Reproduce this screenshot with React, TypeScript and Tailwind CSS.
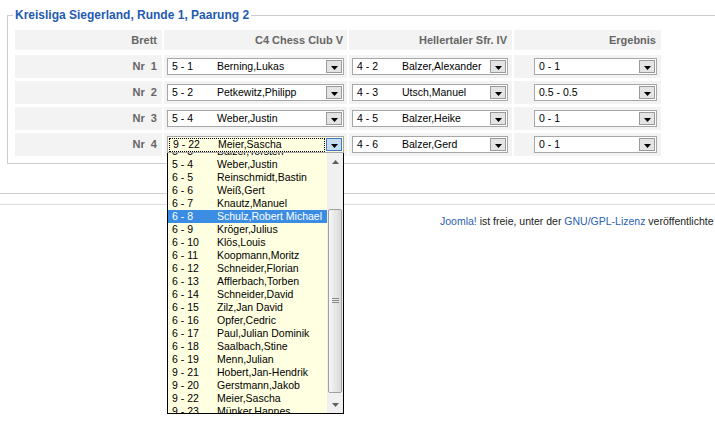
import React from "react";

type Row = { nr: string; a: [string, string]; b: [string, string]; res: string; open?: boolean };

const rows: Row[] = [
  { nr: "Nr\u00a0 1", a: ["5 - 1", "Berning,Lukas"], b: ["4 - 2", "Balzer,Alexander"], res: "0 - 1" },
  { nr: "Nr\u00a0 2", a: ["5 - 2", "Petkewitz,Philipp"], b: ["4 - 3", "Utsch,Manuel"], res: "0.5 - 0.5" },
  { nr: "Nr\u00a0 3", a: ["5 - 4", "Weber,Justin"], b: ["4 - 5", "Balzer,Heike"], res: "0 - 1" },
  { nr: "Nr\u00a0 4", a: ["9 - 22", "Meier,Sascha"], b: ["4 - 6", "Balzer,Gerd"], res: "0 - 1", open: true },
];

const items: [string, string][] = [
  ["5 - 3", "Balzer,Torsten"],
  ["5 - 4", "Weber,Justin"],
  ["6 - 5", "Reinschmidt,Bastin"],
  ["6 - 6", "Weiß,Gert"],
  ["6 - 7", "Knautz,Manuel"],
  ["6 - 8", "Schulz,Robert Michael"],
  ["6 - 9", "Kröger,Julius"],
  ["6 - 10", "Klös,Louis"],
  ["6 - 11", "Koopmann,Moritz"],
  ["6 - 12", "Schneider,Florian"],
  ["6 - 13", "Afflerbach,Torben"],
  ["6 - 14", "Schneider,David"],
  ["6 - 15", "Zilz,Jan David"],
  ["6 - 16", "Opfer,Cedric"],
  ["6 - 17", "Paul,Julian Dominik"],
  ["6 - 18", "Saalbach,Stine"],
  ["6 - 19", "Menn,Julian"],
  ["9 - 21", "Hobert,Jan-Hendrik"],
  ["9 - 20", "Gerstmann,Jakob"],
  ["9 - 22", "Meier,Sascha"],
  ["9 - 23", "Münker,Hannes"],
];

function Arrow({ open }: { open?: boolean }) {
  return (
    <div
      className={
        open
          ? "mr-[1px] flex h-[13px] w-[16px] shrink-0 items-center justify-center border border-[#3d7bbf] bg-[#c6ddf4]"
          : "mr-[1px] flex h-[13px] w-[16px] shrink-0 items-center justify-center border border-[#9a9a9a] bg-[#e4e4e4]"
      }
    >
      <svg width="7" height="4" viewBox="0 0 7 4" className="mt-[2px]">
        <polygon points="0,0 7,0 3.5,4" fill="#000" />
      </svg>
    </div>
  );
}

function Scrollbar() {
  return (
    <div className="flex w-[16px] shrink-0 flex-col bg-[#f0f0f0]">
      <div className="flex h-[17px] items-center justify-center">
        <svg width="7" height="4" viewBox="0 0 7 4">
          <polygon points="0,4 7,4 3.5,0" fill="#606060" />
        </svg>
      </div>
      <div className="flex-1">
        <div className="mx-[1px] mt-[39px] flex h-[184px] items-center justify-center rounded-[2px] border border-[#a0a0a0] bg-gradient-to-r from-[#f7f7f7] to-[#d9d9d9]">
          <svg width="7" height="6" viewBox="0 0 7 6">
            <rect x="0" y="0" width="7" height="1" fill="#8a8a8a" />
            <rect x="0" y="2" width="7" height="1" fill="#8a8a8a" />
            <rect x="0" y="4" width="7" height="1" fill="#8a8a8a" />
          </svg>
        </div>
      </div>
      <div className="flex h-[17px] items-center justify-center">
        <svg width="7" height="4" viewBox="0 0 7 4">
          <polygon points="0,0 7,0 3.5,4" fill="#606060" />
        </svg>
      </div>
    </div>
  );
}

function Dropdown() {
  return (
    <div className="absolute left-[-1px] top-[16px] z-10 flex h-[261px] w-[177px] border-x border-b border-black bg-[#ffffe1]">
      <div className="flex-1 overflow-hidden">
        <div className="mt-[-8px]">
          {items.map(([c, n], i) => (
            <div
              key={i}
              className={
                c === "6 - 8"
                  ? "flex h-[13px] items-center whitespace-nowrap bg-[#3b8de4] pl-[4px] leading-[13px] text-white"
                  : "flex h-[13px] items-center whitespace-nowrap pl-[4px] leading-[13px] text-black"
              }
            >
              <span className="w-[45px] shrink-0">{c}</span>
              <span>{n}</span>
            </div>
          ))}
        </div>
      </div>
      <Scrollbar />
    </div>
  );
}

function Select({
  className,
  code,
  name,
  open,
}: {
  className: string;
  code: string;
  name?: string;
  open?: boolean;
}) {
  return (
    <div
      className={`relative flex h-[17px] items-center border border-[#a7a7a7] ${
        open ? "bg-[#ffffe1]" : "bg-white"
      } ${className}`}
    >
      <div
        className={
          open
            ? "ml-[1px] mr-[1px] flex h-[14px] flex-1 items-center overflow-hidden whitespace-nowrap border border-dotted border-black pl-[3px]"
            : "flex flex-1 items-center overflow-hidden whitespace-nowrap pl-[4px]"
        }
      >
        {name !== undefined ? (
          <>
            <span className="w-[45px] shrink-0">{code}</span>
            <span>{name}</span>
          </>
        ) : (
          <span>{code}</span>
        )}
      </div>
      <Arrow open={open} />
      {open && <Dropdown />}
    </div>
  );
}

export default function App() {
  return (
    <div className="relative h-[432px] w-[715px] overflow-hidden bg-white font-['Liberation_Sans',Arial,sans-serif] text-[10.5px] text-black">
      <fieldset className="ml-[7px] mt-[8px] border-b border-l border-t border-[#cccccc] pb-[7px] pl-[7px] pt-[8px]">
        <legend className="ml-[-2px] px-[2px] text-[12px] font-bold leading-[14px] text-[#1f5bb0]">
          Kreisliga Siegerland, Runde 1, Paarung 2
        </legend>
        <div className="flex flex-col">
          <div className="mb-[5px] flex h-[20px] gap-[2px] text-[11px] font-bold text-[#666666]">
            <div className="flex w-[147px] items-center justify-end bg-[#f3f3f3] pr-[5px]">Brett</div>
            <div className="flex w-[183px] items-center justify-end bg-[#f3f3f3] pr-[4px]">C4 Chess Club V</div>
            <div className="flex w-[163px] items-center justify-end bg-[#f3f3f3] pr-[5px]">Hellertaler Sfr. IV</div>
            <div className="flex w-[147px] items-center justify-end bg-[#f3f3f3] pr-[5px]">Ergebnis</div>
          </div>
          {rows.map((r, i) => (
            <div key={i} className={i < 3 ? "mb-[3px] flex h-[23px] gap-[2px]" : "flex h-[23px] gap-[2px]"}>
              <div className="flex w-[147px] items-center justify-end bg-[#f3f3f3] pr-[5px] text-[11px] font-bold text-[#666666]">
                {r.nr}
              </div>
              <div className="flex w-[183px] items-center bg-[#f3f3f3] pl-[3px]">
                <Select className="w-[177px]" code={r.a[0]} name={r.a[1]} open={r.open} />
              </div>
              <div className="flex w-[163px] items-center bg-[#f3f3f3] pl-[3px]">
                <Select className="w-[156px]" code={r.b[0]} name={r.b[1]} />
              </div>
              <div className="flex w-[147px] items-center justify-end bg-[#f3f3f3] pr-[4px]">
                <Select className="w-[123px]" code={r.res} />
              </div>
            </div>
          ))}
        </div>
      </fieldset>
      <div className="mt-[29px] border-t border-[#cfcfcf]" />
      <div className="mt-[10px] border-t border-[#dcdcdc]" />
      <div className="whitespace-nowrap pl-[440px] pt-[10px] leading-[13px] text-[#222222]">
        <span className="text-[#2b5fb0]">Joomla!</span> ist freie, unter der{" "}
        <span className="text-[#2b5fb0]">GNU/GPL-Lizenz</span> veröffentlichte Software.
      </div>
    </div>
  );
}
